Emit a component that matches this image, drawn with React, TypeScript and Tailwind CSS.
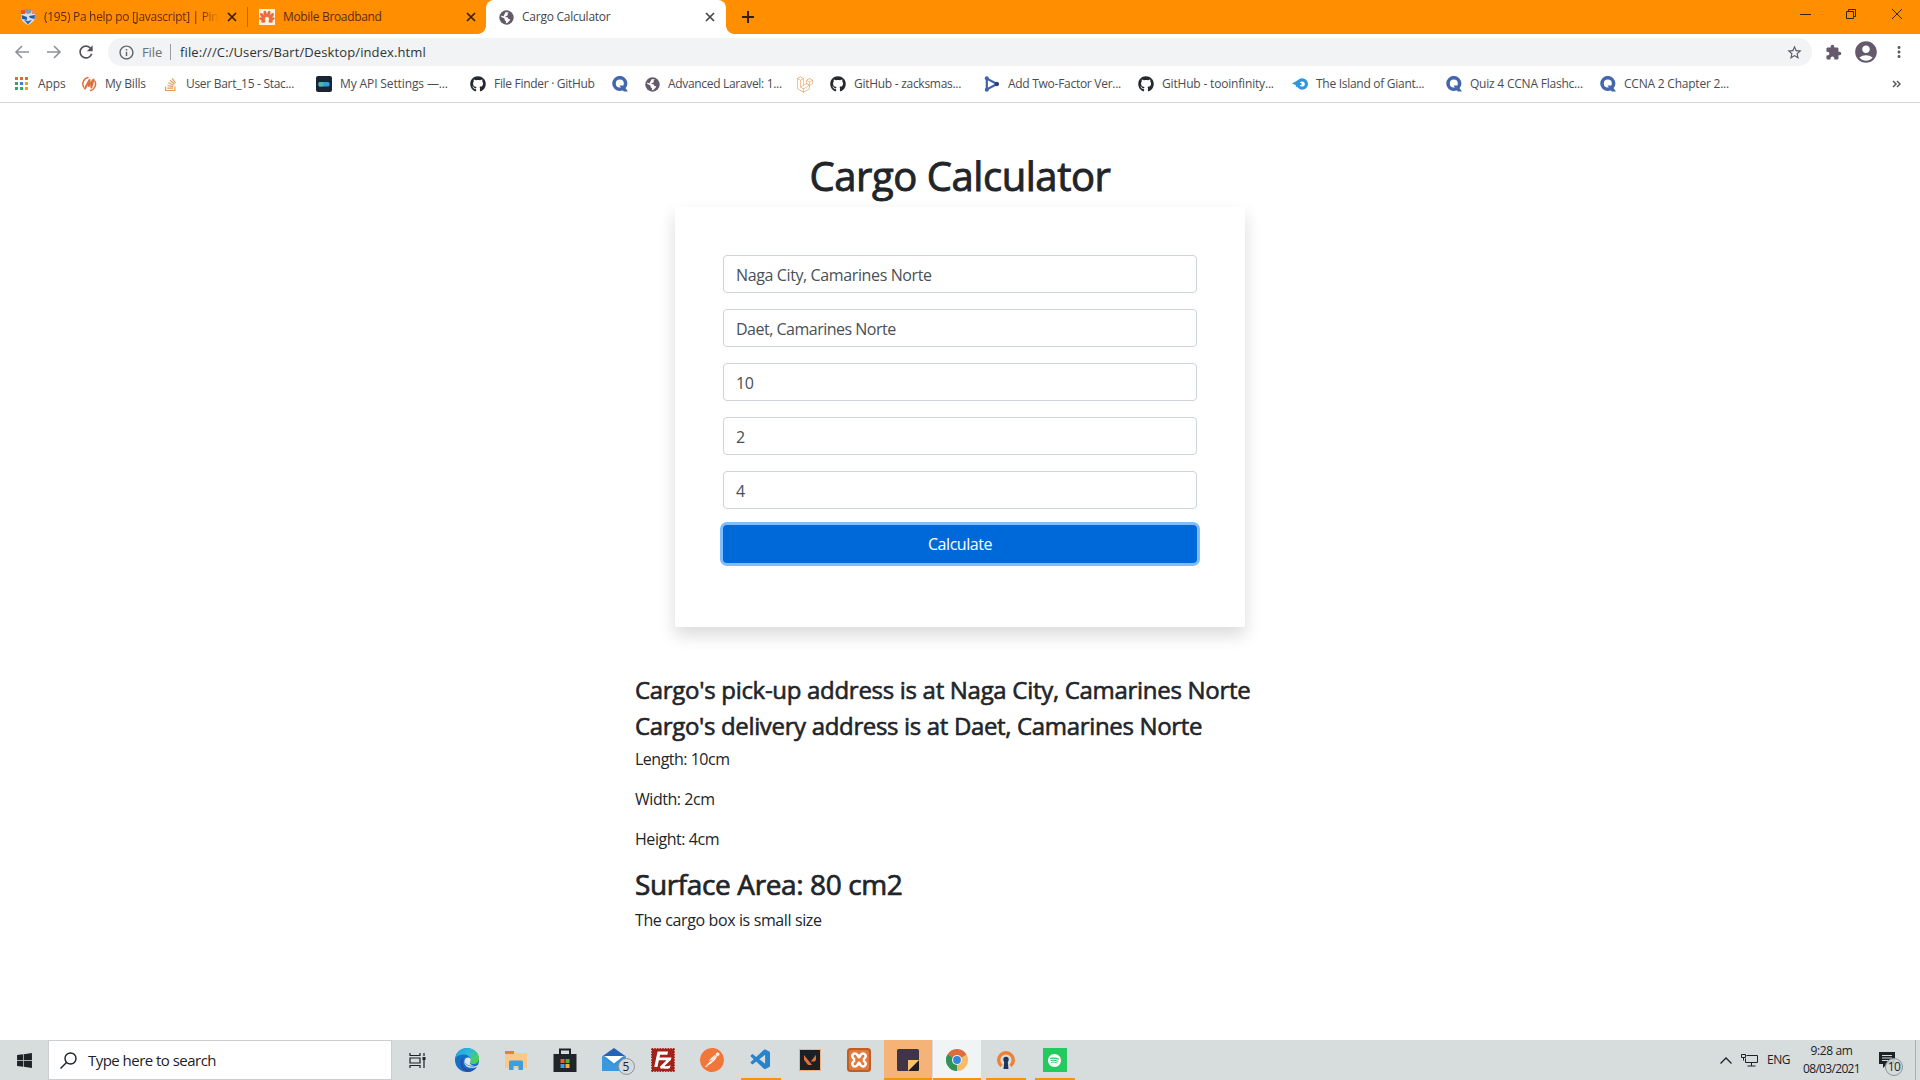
import { ReactNode, useState } from 'react'
import { FaWindows, FaLaravel, FaGithub, FaStackOverflow } from 'react-icons/fa'
import { MdExtension, MdAccountCircle, MdStarBorder, MdRefresh, MdInfoOutline, MdMoreVert } from 'react-icons/md'
import { SiFilezilla, SiPostman, SiSpotify, SiValorant } from 'react-icons/si'
import { VscVscode } from 'react-icons/vsc'

/* ---------- small logos ---------- */

const ShieldIcon = () => (
  <svg width="16" height="16" viewBox="0 0 16 16">
    <path d="M1 1h14v7c0 4-4 6.500-7 8C5 14.500 1 12 1 8z" fill="#d9dde3" />
    <path d="M1 1h4v4H1z" fill="#e4572e" />
    <path d="M5 0h6v4L8 5 5 4z" fill="#8b95a5" />
    <path d="M11 1h4v4h-3z" fill="#f0875a" />
    <path d="M1.500 6L7 8v3l-5-1z" fill="#1f5fae" />
    <path d="M9 7l6-1-.5 4L10 9z" fill="#1f5fae" />
    <path d="M4 11l4 1 4-1-4 4.500z" fill="#2a6cb8" />
  </svg>
)

const HuaweiIcon = () => (
  <svg width="16" height="16" viewBox="0 0 16 16">
    <path d="M0 0h16v16H0z" fill="#fdf3df" />
    <g fill="#ea6a3c">
      <ellipse cx="6.300" cy="5" rx="1.600" ry="3.400" transform="rotate(-12 6.300 5)" />
      <ellipse cx="9.700" cy="5" rx="1.600" ry="3.400" transform="rotate(12 9.700 5)" />
      <ellipse cx="3.700" cy="7" rx="1.600" ry="3.600" transform="rotate(-38 3.700 7)" />
      <ellipse cx="12.300" cy="7" rx="1.600" ry="3.600" transform="rotate(38 12.300 7)" />
      <ellipse cx="3.300" cy="10.300" rx="1.500" ry="3.200" transform="rotate(-65 3.300 10.300)" />
      <ellipse cx="12.700" cy="10.300" rx="1.500" ry="3.200" transform="rotate(65 12.700 10.300)" />
      <ellipse cx="4.300" cy="12.700" rx="1" ry="2.300" transform="rotate(-90 4.300 12.700)" />
      <ellipse cx="11.700" cy="12.700" rx="1" ry="2.300" transform="rotate(90 11.700 12.700)" />
    </g>
  </svg>
)

const GlobeIcon = () => (
  <svg width="15" height="15" viewBox="0 0 15 15">
    <circle cx="7.500" cy="7.500" r="7.200" fill="#635a69" />
    <path d="M6.500 2.300h3.300L8.500 3.800 9 5 7 6.200 5.800 7l2.700.3 1 1.600 1.700.4-.6 1.500-2.400 2.300-1.400.1.300-2-1.400-1-.2-1.700L2 6.800l.6-1.300 1.800 1z" fill="#fff" />
  </svg>
)

const AppsIcon = () => (
  <svg width="14" height="14" viewBox="0 0 14 14">
    <path d="M0 0h3v3H0zM5 0h3v3H5zM10 0h3v3h-3z" fill="#dc6b3c" />
    <path d="M0 5h3v3H0zM0 10h3v3H0z" fill="#2ea865" />
    <path d="M5 5h3v3H5z" fill="#3b82d6" />
    <path d="M5 10h3v3H5z" fill="#2ea865" />
    <path d="M10 5h3v3h-3zM10 10h3v3h-3z" fill="#f0a020" />
  </svg>
)

const BillsIcon = () => (
  <svg width="16" height="16" viewBox="0 0 16 16" fill="none" stroke="#e0703a" strokeLinecap="round">
    <path d="M7 1.600A6.500 6.500 0 0 0 2.500 11" strokeWidth="1.500" />
    <path d="M9.500 14.400A6.500 6.500 0 0 0 13.800 5" strokeWidth="1.500" />
    <path d="M4 12.500L8.500 4 8 10l4.500-6.500-2.200 8" strokeWidth="2.100" strokeLinejoin="round" />
  </svg>
)

const ApiIcon = () => (
  <svg width="16" height="16" viewBox="0 0 16 16">
    <rect width="16" height="16" rx="2" fill="#1b2433" />
    <rect x="2.500" y="6" width="11" height="4.500" rx="1.500" fill="#2f9fe0" />
    <rect x="2.500" y="6" width="5" height="4.500" rx="1.500" fill="#49b8a8" />
  </svg>
)

const QuizletIcon = () => (
  <svg width="16" height="16" viewBox="0 0 16 16">
    <circle cx="7.800" cy="7.500" r="5.800" fill="none" stroke="#4466ae" strokeWidth="3.600" />
    <path d="M7.500 9.500h4l4.500 6h-4.200z" fill="#4466ae" />
  </svg>
)

const TriangleIcon = () => (
  <svg width="16" height="16" viewBox="0 0 16 16" fill="none" stroke="#3f62ad" strokeWidth="2.200">
    <path d="M2.800 2.500v11L13 8z" />
    <circle cx="2.800" cy="2.300" r="2" fill="#3f62ad" stroke="none" />
    <circle cx="2.800" cy="13.700" r="2" fill="#3f62ad" stroke="none" />
    <circle cx="12.800" cy="8" r="2.200" fill="#2b3f73" stroke="none" />
  </svg>
)

const IslandIcon = () => (
  <svg width="16" height="16" viewBox="0 0 16 16">
    <circle cx="10.200" cy="8" r="4.200" fill="none" stroke="#2f97dd" strokeWidth="3.200" />
    <path d="M0 7.500l8-4.500L6.500 7h3v2H6l-1.500 2.500L3.500 9z" fill="#2f97dd" />
  </svg>
)

const EdgeIcon = () => (
  <svg width="24" height="24" viewBox="0 0 24 24">
    <defs>
      <linearGradient id="edgeTop" x1="0" y1="0" x2="1" y2=".6">
        <stop offset="0" stopColor="#1f9fe0" />
        <stop offset=".55" stopColor="#2fb9dc" />
        <stop offset="1" stopColor="#4fd24a" />
      </linearGradient>
    </defs>
    <circle cx="12" cy="12" r="12" fill="#1670c8" />
    <path d="M.3 10C1.500 4 6 0 12 0c7 0 12 5.200 12 10.500 0 3.500-2.700 5.500-5.500 5.500-2.300 0-4-.8-3.600-1.600.5-.6.9-1.400.9-2.400C15.800 9 13 6.500 9 6.500c-4 0-7.200 1.500-8.700 3.500z" fill="url(#edgeTop)" />
    <path d="M9.500 9.500c-2.500 2-2.800 5.500-.8 8.500 2.500 3.600 8 4.600 13 1.200A12 12 0 0 1 12 24C8 23 5 19.500 5.300 15c.1-2.500 1.700-4.800 4.200-5.500z" fill="#2552a8" />
    <path d="M9.500 12.500c0 3.500 4 6.700 9.500 6 1.500-.2 2.800-.7 4-1.500.2.500-.5 1.300-1.500 1.900-4 1.800-9 1-11-1.700-1.300-1.700-1.500-3.200-1-4.700z" fill="#dfe5e8" />
    <path d="M15.800 12c0-1.500-1-2.500-2.800-2.500-2 0-3.500 1.300-3.500 3.300 0 2 2 4 5 4.700 1.500.3 3 .3 4.500 0-2.500-.5-4.600-1.500-4.100-3.100.5-.6.900-1.400.9-2.400z" fill="#dfe5e8" />
  </svg>
)

const FolderIcon = () => (
  <svg width="24" height="24" viewBox="0 0 24 24">
    <path d="M1 3h9l2 2h11v15H1z" fill="#f9c98b" />
    <path d="M1 3h9v3H1z" fill="#d98a2b" />
    <path d="M5 22v-8a1.500 1.500 0 0 1 1.500-1.500h11A1.500 1.500 0 0 1 19 14v8h-4.500v-4h-5v4z" fill="#3f9fdc" />
  </svg>
)

const StoreIcon = () => (
  <svg width="24" height="24" viewBox="0 0 24 24">
    <path d="M7 6V1.500h10V6" fill="none" stroke="#1d2227" strokeWidth="2" />
    <path d="M.5 6h23v18H.5z" fill="#20252b" />
    <path d="M7.500 11h4v4h-4z" fill="#e0602f" />
    <path d="M12.500 11h4v4h-4z" fill="#5da944" />
    <path d="M7.500 16h4v4h-4z" fill="#3c9de0" />
    <path d="M12.500 16h4v4h-4z" fill="#f5ad33" />
  </svg>
)

const MailIcon = () => (
  <svg width="24" height="24" viewBox="0 0 24 24">
    <path d="M0 8.500L12 0l12 8.500z" fill="#2463b5" />
    <path d="M0 8.500h24V23H0z" fill="#2f8fdb" />
    <path d="M2.500 8h19L12 15.500z" fill="#fff" />
    <path d="M0 8.500L12 17l12-8.500V23H0z" fill="#3a98e0" />
  </svg>
)

const XamppIcon = () => (
  <svg width="24" height="24" viewBox="0 0 24 24">
    <rect width="24" height="24" rx="3.500" fill="#bf5f25" />
    <rect x="2" y="2" width="20" height="20" rx="2.500" fill="#e07b3d" />
    <g strokeLinecap="round">
      <path d="M8 8.200l8 7.600M16 8.200l-8 7.600" stroke="#fff" strokeWidth="7.600" />
      <path d="M8 8.200v.1M16 8.200v.1M8 15.800v.1M16 15.800v.1M9.500 12h5" stroke="#e07b3d" strokeWidth="2.800" />
      <path d="M8 8.200l3 3.800-3 3.800M16 8.200L13 12l3 3.800" stroke="#e07b3d" strokeWidth="2.200" fill="none" />
    </g>
  </svg>
)

const StickyIcon = () => (
  <svg width="22" height="22" viewBox="0 0 22 22">
    <path d="M1.500 0h19A1.500 1.500 0 0 1 22 1.500V11L11 22H1.500A1.500 1.500 0 0 1 0 20.500v-19A1.500 1.500 0 0 1 1.500 0z" fill="#403548" />
    <path d="M22 11v9.500a1.500 1.500 0 0 1-1.500 1.500H11z" fill="#211f22" />
    <path d="M11 11h11L11 22z" fill="#fbc06d" />
  </svg>
)

const ChromeIcon = () => (
  <svg width="22" height="22" viewBox="0 0 22 22">
    <path d="M11 11L1.470 5.500A11 11 0 0 1 20.530 5.500z" fill="#dd6d3f" />
    <path d="M11 11L20.530 5.500A11 11 0 0 1 11 22z" fill="#f7bb6a" />
    <path d="M11 11L11 22A11 11 0 0 1 1.470 5.500z" fill="#31935a" />
    <path d="M11 5.500h9.530L11 11z" fill="#dd6d3f" />
    <path d="M15.760 13.750L11 22l0-11z" fill="#f7bb6a" />
    <path d="M6.240 13.750L1.470 5.500 11 11z" fill="#31935a" />
    <circle cx="11" cy="11" r="5" fill="#eef2f4" />
    <circle cx="11" cy="11" r="3.900" fill="#3585dd" />
  </svg>
)

const VpnIcon = () => (
  <svg width="20" height="20" viewBox="0 0 20 20">
    <path d="M5.500 15.800A7.300 7.300 0 1 1 14.500 15.800" fill="none" stroke="#ee8133" strokeWidth="3.400" />
    <circle cx="10" cy="9.500" r="3.400" fill="#d7dcdd" />
    <circle cx="10" cy="9.500" r="2.700" fill="#1f3558" />
    <path d="M8.300 11h3.400l.8 8H7.500z" fill="#1f3558" />
  </svg>
)

/* ---------- browser chrome ---------- */

const CloseX = ({ color }: { color: string }) => (
  <svg width="10" height="10" viewBox="0 0 10 10" stroke={color} strokeWidth="1.700" className="shrink-0">
    <path d="M1 1l8 8M9 1L1 9" />
  </svg>
)

function TabStrip() {
  return (
    <header className="flex h-[34px] bg-[#ff8e00] text-xs text-[#5c2d0c]">
      <div className="mt-[7px] flex h-5 w-[248px] items-center border-r border-[#b9690c] pl-5">
        <ShieldIcon />
        <span className="ml-2 w-[175px] whitespace-nowrap tracking-[-0.3px] mask-r-from-90% mask-r-to-100%">
          (195) Pa help po [Javascript] | Pin
        </span>
        <span className="ml-2"><CloseX color="#33200a" /></span>
      </div>
      <div className="flex w-[238px] items-center pl-[11px]">
        <HuaweiIcon />
        <span className="ml-2 w-[183px] tracking-[-0.33px]">Mobile Broadband</span>
        <CloseX color="#33200a" />
      </div>
      <div className="relative flex w-[240px] items-center rounded-t-lg bg-white pl-[13px]">
        <i className="absolute bottom-0 -left-2 size-2 bg-[radial-gradient(circle_at_0_0,transparent_7.5px,#fff_8px)]" />
        <i className="absolute bottom-0 -right-2 size-2 bg-[radial-gradient(circle_at_100%_0,transparent_7.5px,#fff_8px)]" />
        <GlobeIcon />
        <span className="ml-2 w-[183px] tracking-[-0.25px] text-[#45464b]">Cargo Calculator</span>
        <CloseX color="#45464b" />
      </div>
      <svg width="12" height="12" viewBox="0 0 12 12" stroke="#33200a" strokeWidth="2" className="ml-4 mt-[11px]">
        <path d="M6 0v12M0 6h12" />
      </svg>
      <div className="ml-auto flex h-7 items-center pr-3">
        <svg width="108" height="12" viewBox="0 0 108 12" fill="none" stroke="#3b2208">
          <path d="M0 6.500h11" />
          <path d="M46.500 3.500h7v7h-7zM48.500 3.500v-2h7v7h-2" />
          <path d="M92 1l10 10M102 1L92 11" />
        </svg>
      </div>
    </header>
  )
}

function Toolbar() {
  return (
    <div className="flex h-9 items-center pl-[14px] pr-3">
      <svg width="48" height="14" viewBox="0 0 48 14" fill="none" stroke="#8e9196" strokeWidth="1.600">
        <path d="M15 7H2M8 1L2 7l6 6" />
        <path d="M33 7h13M40 1l6 6-6 6" />
      </svg>
      <MdRefresh size={20} color="#56515b" className="ml-[14px]" />
      <div className="ml-3 flex h-7 w-[1704px] items-center rounded-full bg-[#f1f3f4] pl-[10px] pr-[9px]">
        <MdInfoOutline size={17} color="#5f6368" />
        <span className="ml-[7px] w-[28px] pt-px text-[13px] tracking-[-0.1px] text-[#6b6e73]">File</span>
        <span className="h-4 w-px bg-[#9a9da1]" />
        <span className="ml-[9px] pt-px text-[13px] tracking-[0.11px] text-[#303237]">file:///C:/Users/Bart/Desktop/index.html</span>
        <MdStarBorder size={17} color="#5f5a66" className="ml-auto" />
      </div>
      <MdExtension size={17} color="#655a6c" className="ml-[13px]" />
      <MdAccountCircle size={26} color="#655a6c" className="ml-[11px]" />
      <MdMoreVert size={18} color="#5f5a66" className="ml-auto" />
    </div>
  )
}

const hub = <FaGithub size={16} color="#24292e" />

const bookmarks: { icon: ReactNode; label: string; className: string }[] = [
  { icon: <AppsIcon />, label: 'Apps', className: 'w-[67px] tracking-[-0.1px]' },
  { icon: <BillsIcon />, label: 'My Bills', className: 'w-[81px] tracking-[-0.2px]' },
  { icon: <FaStackOverflow size={15} color="#e09a55" />, label: 'User Bart_15 - Stac...', className: 'w-[154px] tracking-[-0.3px]' },
  { icon: <ApiIcon />, label: 'My API Settings —...', className: 'w-[154px] tracking-[-0.12px]' },
  { icon: hub, label: 'File Finder · GitHub', className: 'w-[142px] tracking-[-0.3px]' },
  { icon: <QuizletIcon />, label: '', className: 'w-[32px]' },
  { icon: <GlobeIcon />, label: 'Advanced Laravel: 1...', className: 'w-[153px] tracking-[-0.32px]' },
  { icon: <FaLaravel size={17} color="#e58a3a" />, label: '', className: 'w-[33px]' },
  { icon: hub, label: 'GitHub - zacksmas...', className: 'w-[154px] tracking-[-0.28px]' },
  { icon: <TriangleIcon />, label: 'Add Two-Factor Ver...', className: 'w-[154px] tracking-[-0.28px]' },
  { icon: hub, label: 'GitHub - tooinfinity...', className: 'w-[154px] tracking-[-0.18px]' },
  { icon: <IslandIcon />, label: 'The Island of Giant...', className: 'w-[154px] tracking-[-0.28px]' },
  { icon: <QuizletIcon />, label: 'Quiz 4 CCNA Flashc...', className: 'w-[154px] tracking-[-0.22px]' },
  { icon: <QuizletIcon />, label: 'CCNA 2 Chapter 2...', className: 'w-[154px] tracking-[-0.22px]' },
]

function BookmarksBar() {
  return (
    <nav className="flex h-[33px] items-center border-b border-[#d3d5d7] pb-1 pl-[14px] pr-[19px] text-xs text-[#4a4c52]">
      {bookmarks.map((b, i) => (
        <div key={i} className={`flex shrink-0 items-center gap-2 whitespace-nowrap ${b.className}`}>
          <span className="flex w-4 shrink-0 justify-center">{b.icon}</span>
          {b.label}
        </div>
      ))}
      <svg width="9" height="8" viewBox="0 0 9 8" fill="none" stroke="#5f5a66" strokeWidth="1.500" className="ml-auto">
        <path d="M1 1l3 3-3 3M5 1l3 3-3 3" />
      </svg>
    </nav>
  )
}

/* ---------- page ---------- */

const fields = [
  { name: 'pickup', value: 'Naga City, Camarines Norte', className: 'tracking-[-0.38px]' },
  { name: 'delivery', value: 'Daet, Camarines Norte', className: 'tracking-[-0.5px]' },
  { name: 'length', value: '10', className: 'tracking-[-0.4px]' },
  { name: 'width', value: '2', className: '' },
  { name: 'height', value: '4', className: '' },
]

function CargoPage() {
  const [form, setForm] = useState<Record<string, string>>(Object.fromEntries(fields.map(f => [f.name, f.value])))
  const area = Number(form.length) * Number(form.width) * Number(form.height)

  return (
    <main className="flex-1 pt-[49px] text-[#212529]">
      <h1 className="mb-[7px] text-center text-[40px] leading-[48px] tracking-[-0.45px] [-webkit-text-stroke:0.9px_#212529]">
        Cargo Calculator
      </h1>
      <form
        className="mx-auto w-[570px] bg-white p-12 shadow-[0_8px_16px_rgba(0,0,0,0.15)]"
        onSubmit={e => e.preventDefault()}
      >
        {fields.map(f => (
          <input
            key={f.name}
            className={`mb-4 block h-[38px] w-full rounded border border-[#ced4da] px-3 pt-0.5 text-[#495057] ${f.className}`}
            value={form[f.name]}
            onChange={e => setForm({ ...form, [f.name]: e.target.value })}
          />
        ))}
        <button className="mb-4 block h-[38px] w-full rounded bg-[#0069d9] tracking-[-0.45px] text-white shadow-[0_0_0_3px_#80bdff]">
          Calculate
        </button>
      </form>

      <section className="ml-[635px] mt-[49px] tracking-[-0.5px]">
        <h4 className="mb-2 text-2xl leading-[28px] tracking-[-0.3px] [-webkit-text-stroke:0.6px_#212529]">
          Cargo's pick-up address is at {form.pickup}
        </h4>
        <h4 className="mb-[7px] text-2xl leading-[28px] tracking-[-0.34px] [-webkit-text-stroke:0.6px_#212529]">
          Cargo's delivery address is at {form.delivery}
        </h4>
        <p className="mb-4">Length: {form.length}cm</p>
        <p className="mb-4 tracking-[-0.45px]">Width: {form.width}cm</p>
        <p className="mb-4 tracking-[-0.45px]">Height: {form.height}cm</p>
        <h3 className="mb-[7px] text-[28px] leading-[34px] tracking-[-0.38px] [-webkit-text-stroke:0.7px_#212529]">
          Surface Area: {area} cm2
        </h3>
        <p className="tracking-[-0.38px]">The cargo box is small size</p>
      </section>
    </main>
  )
}

/* ---------- taskbar ---------- */

const apps: { name: string; icon: ReactNode; open?: boolean; cell?: string }[] = [
  { name: 'Edge', icon: <EdgeIcon /> },
  { name: 'Explorer', icon: <FolderIcon /> },
  { name: 'Store', icon: <StoreIcon /> },
  {
    name: 'Mail',
    icon: (
      <span className="relative">
        <MailIcon />
        <b className="absolute left-4 top-[10px] flex size-[17px] items-center justify-center rounded-full border border-[#8b9196] bg-[#d5dadc] text-xs font-normal text-[#1d2227]">5</b>
      </span>
    ),
  },
  { name: 'FileZilla', icon: <span className="bg-white"><SiFilezilla size={24} color="#a1221b" /></span> },
  { name: 'Postman', icon: <span className="rounded-full bg-white"><SiPostman size={24} color="#f0763a" /></span> },
  { name: 'VS Code', icon: <VscVscode size={24} color="#2584cc" />, open: true },
  {
    name: 'Valorant',
    icon: <span className="flex size-[22px] items-center justify-center border border-[#f0b080] bg-[#1c2024]"><SiValorant size={12} color="#e0703a" /></span>,
  },
  { name: 'XAMPP', icon: <XamppIcon /> },
  { name: 'Sticky Notes', icon: <StickyIcon />, open: true, cell: 'bg-[#f5b377]' },
  { name: 'Chrome', icon: <ChromeIcon />, open: true, cell: 'bg-[#f0f4f5]' },
  { name: 'OpenVPN', icon: <VpnIcon />, open: true },
  {
    name: 'Spotify',
    icon: <span className="flex size-6 items-center justify-center bg-[#25ca5f]"><SiSpotify size={13} color="#fff" /></span>,
    open: true,
  },
]

function Taskbar() {
  return (
    <footer className="flex h-10 bg-[#d7dcdd] text-xs text-[#1d2227]">
      <div className="flex w-12 items-center justify-center">
        <FaWindows size={17} />
      </div>
      <div className="flex w-[344px] items-center border border-[#cbcfd1] bg-white">
        <svg width="17" height="17" viewBox="0 0 17 17" fill="none" stroke="#1d2227" strokeWidth="1.400" className="ml-[11px]">
          <circle cx="10.500" cy="6.500" r="5.500" />
          <path d="M6.500 10.500L.5 16.500" />
        </svg>
        <span className="ml-[11px] text-[15px] tracking-[-0.53px]">Type here to search</span>
      </div>
      <div className="flex w-[50px] items-center justify-center">
        <svg width="17" height="17" viewBox="0 0 17 17" fill="none" stroke="#1d2227" strokeWidth="1.200">
          <path d="M1 1v2.500h10V1M1 16v-2.500h10V16M1 6h10v5H1zM15 1v3M15 8v8" />
          <path d="M13.500 5h3v3h-3z" fill="#1d2227" stroke="none" />
        </svg>
      </div>
      {apps.map(a => (
        <div key={a.name} title={a.name} className="flex w-[49px] shrink-0 justify-center">
          <div
            className={`flex items-center justify-center pt-0.5 ${a.open ? 'border-b-2 border-[#f39314]' : 'mb-0.5'} ${a.cell ? `w-12 ${a.cell}` : 'w-10'}`}
          >
            {a.icon}
          </div>
        </div>
      ))}
      <div className="ml-auto flex items-center">
        <svg width="12" height="7" viewBox="0 0 12 7" fill="none" stroke="#1d2227" strokeWidth="1.300">
          <path d="M.5 6.500L6 1l5.500 5.500" />
        </svg>
        <svg width="17" height="14" viewBox="0 0 17 14" fill="none" stroke="#1d2227" className="ml-[9px]">
          <path d="M5.500 2.500h11v7h-12v-4M10.500 9.500v3.500M6.500 13h8M.5 1.500h4v3h-4zM2.500 4.500v3" />
        </svg>
        <span className="ml-[9px] w-9 tracking-[-0.5px]">ENG</span>
        <div className="w-[57px] text-center leading-[18px] tracking-[-0.67px]">
          <div className="tracking-[-0.4px]">9:28 am</div>
          <div>08/03/2021</div>
        </div>
        <div className="relative ml-[19px] mr-[20px]">
          <svg width="16" height="16" viewBox="0 0 16 16">
            <path d="M0 0h16v12H8l-4 4v-4H0z" fill="#1d2227" />
            <path d="M3 3.500h10M3 6h10M3 8.500h10" stroke="#d7dcdd" />
          </svg>
          <b className="absolute left-[6px] top-[6px] flex size-[18px] items-center justify-center rounded-full border border-[#8b9196] bg-[#d5dadc]/90 text-xs font-normal tracking-[-0.5px]">10</b>
        </div>
        <div className="h-full w-[5px] border-l border-[#a9aeb1]" />
      </div>
    </footer>
  )
}

export default function App() {
  return (
    <div className="flex h-[1080px] w-[1920px] flex-col overflow-hidden bg-white font-['Open_Sans','Noto_Sans',sans-serif]">
      <TabStrip />
      <Toolbar />
      <BookmarksBar />
      <CargoPage />
      <Taskbar />
    </div>
  )
}
